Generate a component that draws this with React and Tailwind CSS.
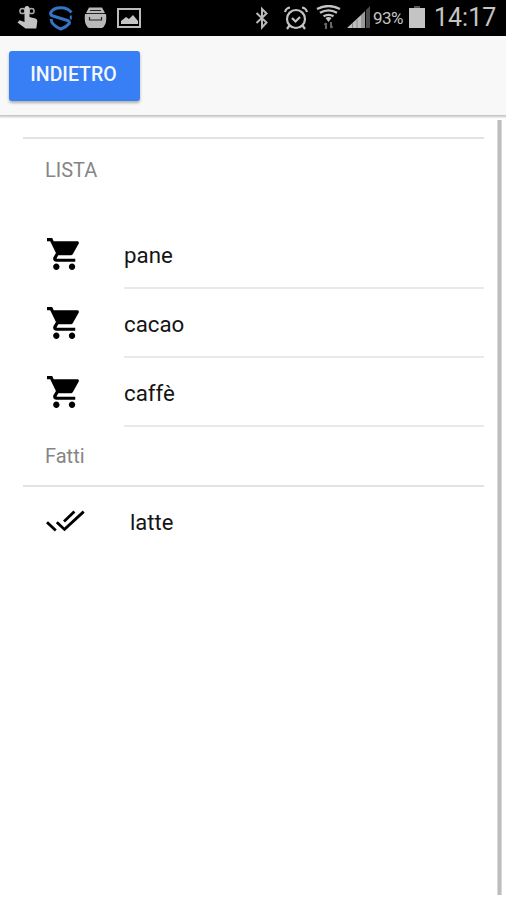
const CartIcon = () => (
  <svg className="block h-8 w-8 shrink-0" viewBox="48 51 417 410" preserveAspectRatio="none">
    <path d="M169.6 377.6c-22.882 0-41.6 18.718-41.6 41.601 0 22.882 18.718 41.6 41.6 41.6s41.601-18.718 41.601-41.6c-.001-22.884-18.72-41.601-41.601-41.601zM48 51.2v41.6h41.6l74.883 151.682-31.308 50.954c-3.118 5.2-5.2 12.482-5.2 19.765 0 27.85 19.025 41.6 44.825 41.6H416v-40H177.893c-3.118 0-5.2-2.082-5.2-5.2 0-1.036 2.207-5.2 2.207-5.2l20.782-32.8h154.954c15.601 0 29.128-8.317 36.4-21.836l74.882-128.8c1.237-2.461 2.082-6.246 2.082-10.4 0-11.446-9.364-19.4-20.8-19.4H135.364L115.6 51.2H48zm326.399 326.4c-22.882 0-41.6 18.718-41.6 41.601 0 22.882 18.718 41.6 41.6 41.6S416 442.082 416 419.2c0-22.883-18.719-41.6-41.601-41.6z" />
  </svg>
);

const DoneAllIcon = () => (
  <svg className="block h-[22px] w-[39px] shrink-0" viewBox="0 0 39 22" fill="none" stroke="#000" strokeWidth="2.8">
    <path d="M1 12.2 9.8 20.6M10.8 12.2 18.5 19.4 37.7 1.6M28.4 1.6 18 11.6" />
  </svg>
);

const StatusBar = () => (
  <header className="flex h-9 items-center bg-black font-['Roboto',sans-serif] text-[#c4c4c4]">
    <svg className="ml-[16px] h-[26px] w-[23px]" viewBox="0 0 23 26" fill="#c4c4c4">
      <g fill="none" stroke="#a8a8a8" strokeWidth="1.5">
        <circle cx="6.5" cy="6" r="2.6" />
        <circle cx="15.5" cy="6" r="2.6" />
      </g>
      <path d="M8.500 3.500q0-2.500 2.500-2.500t2.500 2.500V12l6 1.600q2 .6 1.800 2.600l-1 7.300H9.500L1.500 17.500l2-2.300L8.500 17z" />
    </svg>
    <svg className="ml-[9px] h-[26px] w-[26px]" viewBox="0 0 26 26" fill="none" stroke="#3573c4" strokeWidth="3">
      <path d="M23.500 7.500Q19.500 2.800 13 2.800 5.500 2.800 2.700 7.500q-.6 2.500 2.300 3.500l14.500 4.500q3 1.200 1.500 3.300-2.800 3.400-8 5.200-6.500-2.300-9-6.500-.8-1.500-.8-3.500" />
      <path d="M22.800 10.500v4" strokeWidth="2" />
    </svg>
    <svg className="ml-[10px] h-[26px] w-[23px]" viewBox="0 0 23 26" fill="#b9b9b9">
      <path d="M5 2.500h13l3 5.500H2zM1 9h21q1.400 11-4 14H5Q-.4 20 1 9z" />
      <path d="M6 5.500h11M3 8.500h17M5.500 12v3h12v-3" fill="none" stroke="#222" strokeWidth="1.200" />
    </svg>
    <svg className="ml-[9px] h-[26px] w-[26px]" viewBox="0 0 26 26" fill="#c4c4c4">
      <path d="M2 4h22v18H2z" fill="none" stroke="#bcbcbc" strokeWidth="2" />
      <path d="M5 19v-3l5-4 3 2 4-4 5 6v3z" />
    </svg>
    <svg className="ml-[111px] h-[26px] w-[18px]" viewBox="0 0 18 26" fill="none" stroke="#b9b9b9" strokeWidth="2">
      <path d="m3.500 8 10 9.500-4.500 5V4l4.500 4.500-10 9.500" />
    </svg>
    <svg className="ml-[12px] h-[26px] w-[26px]" viewBox="0 0 26 26" fill="none" stroke="#c4c4c4" strokeWidth="2.200">
      <circle cx="13" cy="14" r="9" />
      <path d="m9 13 3.500 3.500L17 12M2 7q1-4 5-4.500M24 7q-1-4-5-4.500M6.500 20.500 4 24M19.500 20.500 22 24" />
    </svg>
    <svg className="ml-[7px] h-[26px] w-[25px]" viewBox="0 0 25 26" fill="none" stroke="#c4c4c4" strokeWidth="2.300">
      <path d="M1 4q11.500-6 23 0M4 7.800q8.500-5 17 0M7.500 11.300q5-3 10 0" />
      <path d="m9.500 13 3 4 3-4q-3-2-6 0z" fill="#c4c4c4" stroke="none" />
      <path d="M10 24v-6M8.500 20l1.500-2M15 17v6M16.500 21 15 23" stroke="#666" strokeWidth="2" />
    </svg>
    <svg className="ml-[6px] h-[26px] w-[25px]" viewBox="0 0 25 26">
      <path d="M0 23 14 10v13z" fill="#bdbdbd" />
      <path d="M5.500 18v5M10 14v9" stroke="#888" strokeWidth="1" />
      <path d="M14 10l4-4v17h-4z" fill="#999" />
      <path d="M19 5l4-4v22h-4z" fill="#4b4b4b" />
    </svg>
    <span className="ml-[1px] w-[32px] whitespace-nowrap pt-[1px] text-[17px] leading-none tracking-[-0.5px]">93%</span>
    <svg className="ml-[3px] h-[26px] w-[18px]" viewBox="0 0 18 26" fill="#c4c4c4">
      <path d="M6 1h6v2H6z" fill="#555" />
      <path d="M1 3h16v20H1z" />
    </svg>
    <span className="ml-[8px] whitespace-nowrap pb-px text-[25px] leading-none">14:17</span>
  </header>
);

const items = ["pane", "cacao", "caffè"];

export default function App() {
  return (
    <div className="flex h-[900px] w-[506px] flex-col overflow-hidden bg-white font-['Roboto',sans-serif] text-[22px] text-[#151515]">
      <StatusBar />
      <nav className="relative h-[79px] shrink-0 bg-[#f8f8f8] pl-[9px] pt-[15px] shadow-[0_1px_2px_1px_rgba(0,0,0,0.23)]">
        <button className="flex h-[50px] w-[131px] items-center justify-center rounded-[3px] bg-[#387ef5] pb-[2px] text-[19.5px] font-medium leading-none text-[#f4f8ff] shadow-[0_2px_3px_rgba(0,0,0,0.3)]">
          <span className="-ml-[2px]">INDIETRO</span>
        </button>
      </nav>
      <main className="flex flex-1 justify-between pl-[23px] pr-[4px] pt-[5px]">
        <section className="w-[461px] pt-[17px]">
          <div className="h-[83px] border-t-2 border-[#e3e3e3] pl-[22px] pt-[20px] text-[20px] leading-[22px] text-[#858585]">LISTA</div>
          {items.map((name) => (
            <div key={name} className="flex h-[69px] pl-[24px]">
              <div className="w-[77px] pt-[18px]">
                <CartIcon />
              </div>
              <div className="flex-1 border-b-2 border-[#e9e9e9] pt-[22px] text-[22.3px] leading-[26px]">{name}</div>
            </div>
          ))}
          <div className="h-[60px] border-b-2 border-[#e3e3e3] pl-[22px] pt-[18px] text-[20px] leading-[22px] text-[#858585]">Fatti</div>
          <div className="flex h-[66px] pl-[23px] pt-[23px]">
            <DoneAllIcon />
            <div className="ml-[45px] leading-[26px]">latte</div>
          </div>
        </section>
        <div className="h-[775px] w-[5px] border-x border-[#d9d9d9] bg-[#bdbdbd]" />
      </main>
    </div>
  );
}
